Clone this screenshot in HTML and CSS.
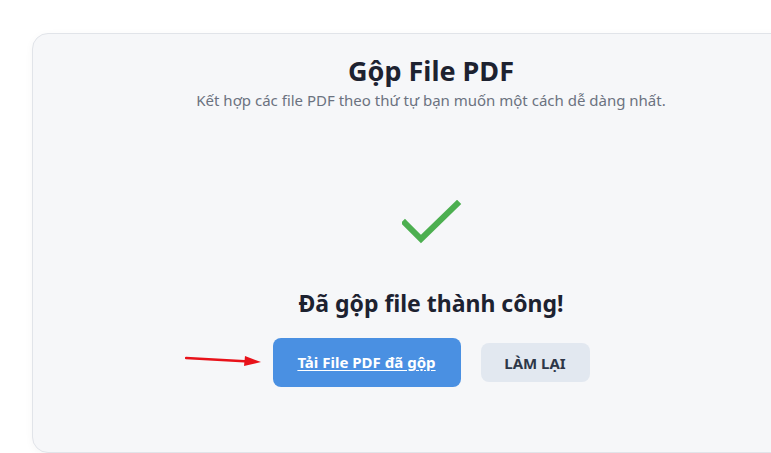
FILE: index.html
```html
<!DOCTYPE html>
<html lang="vi">
<head>
    <meta charset="UTF-8">
    <meta name="viewport" content="width=device-width, initial-scale=1.0">
    <title>Gộp File PDF</title>
    <link rel="stylesheet" href="styles.css">
</head>
<body>
    <div class="page">
        <div class="card">
            <h1>Gộp File PDF</h1>
            <p class="subtitle">Kết hợp các file PDF theo thứ tự bạn muốn một cách dễ dàng nhất.</p>

            <div class="done">
                <svg class="check" width="60" height="44" viewBox="0 0 60 44">
                    <polyline points="3,23 19,39 55,4" fill="none" stroke="#4caf50" stroke-width="6" stroke-linecap="square"/>
                </svg>
                <h2>Đã gộp file thành công!</h2>

                <div class="actions">
                    <span class="download-wrap">
                        <!-- pointer drawn over the screenshot -->
                        <svg class="arrow" width="78" height="14" viewBox="0 0 78 14">
                            <line x1="1" y1="4" x2="64" y2="7.5" stroke="#e8121a" stroke-width="2.5" stroke-linecap="round"/>
                            <polygon points="60,2 76,8 59,12" fill="#e8121a"/>
                        </svg>
                        <a href="#" class="btn-download">Tải File PDF đã gộp</a>
                    </span>
                    <button class="btn-reset">LÀM LẠI</button>
                </div>
            </div>
        </div>
    </div>
</body>
</html>
```

FILE: styles.css
```css
* {
    margin: 0;
    padding: 0;
    box-sizing: border-box;
}

body {
    font-family: 'Noto Sans', 'Open Sans', sans-serif;
    background: white;
    overflow: hidden;
}

.page {
    padding: 33px 0 0 32px;
}

.card {
    width: 798px;
    height: 420px;
    background: #f6f7f9;
    border: 1px solid #e1e4e9;
    border-radius: 16px;
    box-shadow: 0 2px 8px rgba(0,0,0,0.04);
    padding-top: 19px;
    text-align: center;
}

h1 {
    color: #1d2230;
    font-size: 27px;
    font-weight: 700;
    line-height: 36px;
}

.subtitle {
    color: #6b7280;
    font-size: 15px;
    line-height: 20px;
    margin-top: 1px;
}

.done {
    display: flex;
    flex-direction: column;
    align-items: center;
    margin-top: 90px;
}

.check {
    display: block;
    margin-left: 1px;
}

h2 {
    color: #1d2230;
    font-size: 23px;
    font-weight: 700;
    line-height: 30px;
    margin-top: 44px;
}

.actions {
    display: flex;
    align-items: center;
    gap: 20px;
    margin-top: 20px;
}

.download-wrap {
    position: relative;
    display: inline-block;
}

.arrow {
    position: absolute;
    right: calc(100% + 10px);
    top: 16px;
}

.btn-download {
    display: block;
    width: 188px;
    height: 49px;
    line-height: 49px;
    background: #4a90e2;
    color: white;
    border-radius: 8px;
    font-size: 15px;
    font-weight: 700;
    text-decoration: underline;
    text-underline-offset: 2px;
}

.btn-reset {
    width: 109px;
    height: 39px;
    background: #e2e8f0;
    color: #2d3748;
    border: none;
    border-radius: 8px;
    font-family: inherit;
    font-size: 15px;
    font-weight: 700;
    cursor: pointer;
}
```
